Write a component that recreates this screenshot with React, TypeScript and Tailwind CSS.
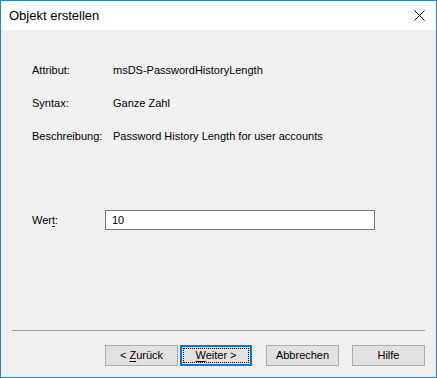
import { useState } from "react";

const FONT = "font-['Liberation_Sans',_Arial,_sans-serif]";

function Row({ label, value }: { label: string; value: string }) {
  return (
    <div className="flex h-4 items-center leading-4">
      <span className="w-[81px] shrink-0">{label}</span>
      <span>{value}</span>
    </div>
  );
}

function DlgButton({
  children,
  focused = false,
  className = "",
}: {
  children: React.ReactNode;
  focused?: boolean;
  className?: string;
}) {
  if (focused) {
    return (
      <button className={`h-[21px] w-[72px] border-2 border-[#0078d7] bg-[#e1e1e1] p-px ${className}`}>
        <span className="flex h-full w-full items-center justify-center border border-dotted border-black leading-none">
          <span>{children}</span>
        </span>
      </button>
    );
  }
  return (
    <button
      className={`flex h-[21px] w-[73px] items-center justify-center border border-[#adadad] bg-[#e1e1e1] leading-none ${className}`}
    >
      <span>{children}</span>
    </button>
  );
}

export default function App() {
  const [value, setValue] = useState("10");

  return (
    <div className={`flex h-[378px] w-[437px] flex-col border border-[#1883d7] bg-[#f0f0f0] text-[11px] text-black ${FONT}`}>
      {/* Title bar */}
      <div className="flex h-[29px] shrink-0 items-center justify-between bg-white pl-2 pr-[11px]">
        <span className="text-[13px] leading-4">Objekt erstellen</span>
        <svg width="11" height="11" viewBox="0 0 11 11" className="mb-px">
          <path d="M0.5 0.5 L10.5 10.5 M10.5 0.5 L0.5 10.5" stroke="#000" strokeWidth="1" />
        </svg>
      </div>

      {/* Body */}
      <div className="flex flex-1 flex-col pl-[31px]">
        <div className="mt-[32px] flex flex-col gap-[17px]">
          <Row label="Attribut:" value="msDS-PasswordHistoryLength" />
          <Row label="Syntax:" value="Ganze Zahl" />
          <Row label="Beschreibung:" value="Password History Length for user accounts" />
        </div>

        <div className="mt-[66px] flex h-5 items-center">
          <span className="w-[73px] shrink-0 leading-4">
            Wer<span className="underline underline-offset-2">t</span>:
          </span>
          <input
            value={value}
            onChange={(e) => setValue(e.target.value)}
            className="h-5 w-[270px] border border-[#7a7a7a] bg-white px-[6px] text-[11px] leading-4 outline-none"
          />
        </div>
      </div>

      {/* Footer */}
      <div className="flex flex-col px-[11px] pb-[11px]">
        <div className="h-px bg-[#a0a0a0]" />
        <div className="mt-[14px] flex justify-end">
          <DlgButton>
            {"< "}
            <span className="underline underline-offset-2">Z</span>urück
          </DlgButton>
          <DlgButton focused className="ml-[2px]">
            <span className="underline underline-offset-2">W</span>eiter {">"}
          </DlgButton>
          <DlgButton className="ml-[14px]">Abbrechen</DlgButton>
          <DlgButton className="ml-[13px]">Hilfe</DlgButton>
        </div>
      </div>
    </div>
  );
}
